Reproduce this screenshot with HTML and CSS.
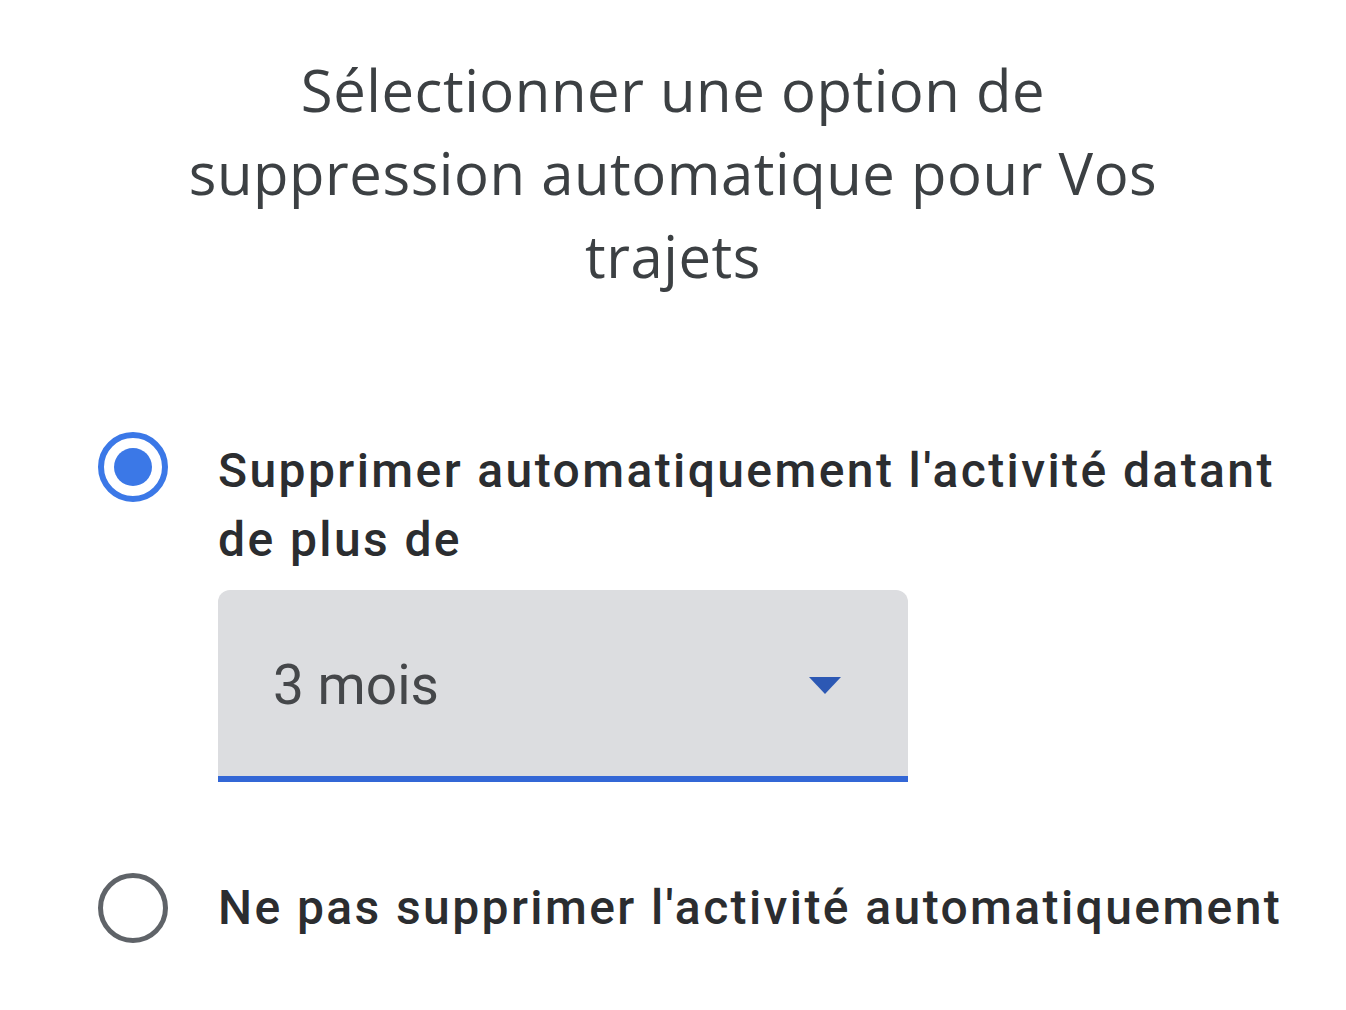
FILE: index.html
```html
<!DOCTYPE html>
<html lang="fr">
<head>
<meta charset="utf-8">
<title>Suppression automatique</title>
<link rel="stylesheet" href="styles.css">
</head>
<body>
<main class="dialog">
  <h1 class="title">Sélectionner une option de<br>suppression automatique pour Vos<br>trajets</h1>
  <div class="options">
    <div class="option">
      <span class="radio radio-checked"><span class="radio-dot"></span></span>
      <div class="option-body">
        <p class="option-label">Supprimer automatiquement l'activité datant<br>de plus de</p>
        <div class="select">
          <span class="select-value">3 mois</span>
          <svg class="select-arrow" width="32" height="17" viewBox="0 0 32 17"><path d="M0 0h32L16 17z" fill="#2c58b4"/></svg>
        </div>
      </div>
    </div>
    <div class="option option-second">
      <span class="radio radio-off"></span>
      <div class="option-body">
        <p class="option-label">Ne pas supprimer l'activité automatiquement</p>
      </div>
    </div>
  </div>
</main>
</body>
</html>
```
FILE: styles.css
```css
html, body {
  margin: 0;
  padding: 0;
  background: #ffffff;
}
.dialog {
  width: 1346px;
  height: 1010px;
  box-sizing: border-box;
  padding-top: 48px;
  display: flex;
  flex-direction: column;
}
.title {
  margin: 0;
  text-align: center;
  font-family: "Open Sans", "Noto Sans", sans-serif;
  font-weight: 400;
  font-size: 58px;
  line-height: 83px;
  color: #3c4043;
  letter-spacing: 0.55px;
}
.options {
  display: flex;
  flex-direction: column;
  padding-left: 98px;
  margin-top: 139px;
}
.option {
  display: flex;
  align-items: flex-start;
  gap: 50px;
}
.option-second {
  margin-top: 91px;
}
.radio {
  flex: none;
  width: 70px;
  height: 70px;
  box-sizing: border-box;
  border-radius: 50%;
  border: 5px solid #5f6368;
  margin-top: -4px;
  display: flex;
  align-items: center;
  justify-content: center;
}
.radio-off {
  margin-top: 0;
}
.radio-checked {
  border: 6px solid #3b78e7;
}
.radio-dot {
  width: 38px;
  height: 38px;
  border-radius: 50%;
  background: #3b78e7;
}
.option-body {
  display: flex;
  flex-direction: column;
}
.option-label {
  margin: 0;
  font-family: "Roboto", "Liberation Sans", sans-serif;
  font-weight: 500;
  font-size: 48px;
  line-height: 69px;
  color: #2b2d30;
  letter-spacing: 2.4px;
}
.select {
  margin-top: 16px;
  width: 690px;
  height: 192px;
  box-sizing: border-box;
  background: #dcdde0;
  border-radius: 12px 12px 0 0;
  border-bottom: 6px solid #3367d6;
  display: flex;
  align-items: center;
  justify-content: space-between;
  padding: 4px 67px 0 55px;
}
.select-value {
  font-family: "Roboto", "Liberation Sans", sans-serif;
  font-size: 55px;
  color: #45474a;
}
.select-arrow {
  display: block;
}
```
